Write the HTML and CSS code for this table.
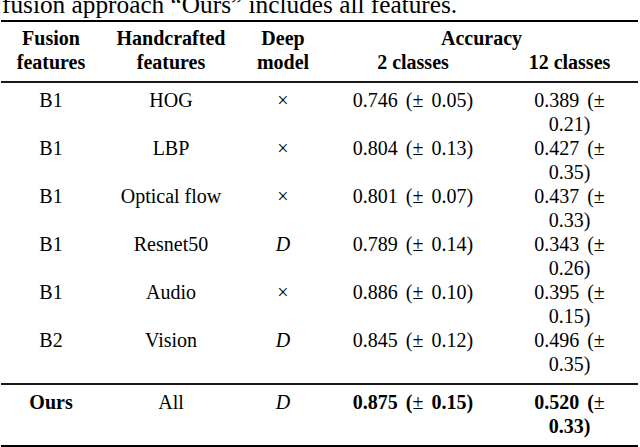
FILE: index.html
```html
<!DOCTYPE html>
<html lang="en">
<head>
<meta charset="utf-8">
<title>Fusion results table</title>
<link rel="stylesheet" href="styles.css">
</head>
<body>
<p class="caption">fusion approach “Ours” includes all features.</p>
<div class="table">
  <div class="thead">
    <div class="hcell c1 span2">Fusion<br>features</div>
    <div class="hcell c2 span2">Handcrafted<br>features</div>
    <div class="hcell c3 span2">Deep<br>model</div>
    <div class="hcell acc">Accuracy</div>
    <div class="hcell c4">2 classes</div>
    <div class="hcell c5">12 classes</div>
  </div>
  <div class="tbody">
    <div class="row"><div class="cell">B1</div><div class="cell">HOG</div><div class="cell">×</div><div class="cell num">0.746 (± 0.05)</div><div class="cell num"><span class="wrap">0.389 (± 0.21)</span></div></div>
    <div class="row"><div class="cell">B1</div><div class="cell">LBP</div><div class="cell">×</div><div class="cell num">0.804 (± 0.13)</div><div class="cell num"><span class="wrap">0.427 (± 0.35)</span></div></div>
    <div class="row"><div class="cell">B1</div><div class="cell">Optical flow</div><div class="cell">×</div><div class="cell num">0.801 (± 0.07)</div><div class="cell num"><span class="wrap">0.437 (± 0.33)</span></div></div>
    <div class="row"><div class="cell">B1</div><div class="cell">Resnet50</div><div class="cell"><i>D</i></div><div class="cell num">0.789 (± 0.14)</div><div class="cell num"><span class="wrap">0.343 (± 0.26)</span></div></div>
    <div class="row"><div class="cell">B1</div><div class="cell">Audio</div><div class="cell">×</div><div class="cell num">0.886 (± 0.10)</div><div class="cell num"><span class="wrap">0.395 (± 0.15)</span></div></div>
    <div class="row"><div class="cell">B2</div><div class="cell">Vision</div><div class="cell"><i>D</i></div><div class="cell num">0.845 (± 0.12)</div><div class="cell num"><span class="wrap">0.496 (± 0.35)</span></div></div>
  </div>
  <div class="tfoot">
    <div class="row"><div class="cell"><b>Ours</b></div><div class="cell">All</div><div class="cell"><i>D</i></div><div class="cell num"><b>0.875 (</b>±<b> 0.15)</b></div><div class="cell num"><span class="wrap"><b>0.520 (</b>±<b> 0.33)</b></span></div></div>
  </div>
</div>
</body>
</html>
```

FILE: styles.css
```css
html, body {
  margin: 0;
  padding: 0;
  background: #fff;
  color: #000;
  font-family: "Liberation Serif", "Times New Roman", serif;
  overflow: hidden;
}

.caption {
  margin: -8px 0 3px 2px;
  font-size: 25.3px;
  line-height: 25px;
  white-space: nowrap;
}

.table {
  margin-left: 1px;
  width: 637px;
  font-size: 20px;
}

.thead,
.row {
  display: grid;
  grid-template-columns: 100px 140px 84px 176px 137px;
}

.thead {
  border-top: 2px solid #000;
  padding: 5px 0 7px;
  font-weight: bold;
  line-height: 23.5px;
  text-align: center;
}

.span2 {
  grid-row: 1 / 3;
}

.c1 { grid-column: 1; }
.c2 { grid-column: 2; }
.c3 { grid-column: 3; }
.acc { grid-column: 4 / 6; grid-row: 1; }
.c4 { grid-column: 4; grid-row: 2; }
.c5 { grid-column: 5; grid-row: 2; }

.tbody {
  border-top: 2px solid #1a1a1a;
  padding: 5px 0 7px;
}

.tfoot {
  border-top: 2px solid #1a1a1a;
  border-bottom: 2px solid #000;
  padding: 5px 0 7px;
}

.row {
  min-height: 48px;
  line-height: 24px;
}

.cell {
  text-align: center;
}

.num {
  word-spacing: 3px;
}

.wrap {
  display: block;
  width: 90px;
  margin: 0 auto;
}
```
